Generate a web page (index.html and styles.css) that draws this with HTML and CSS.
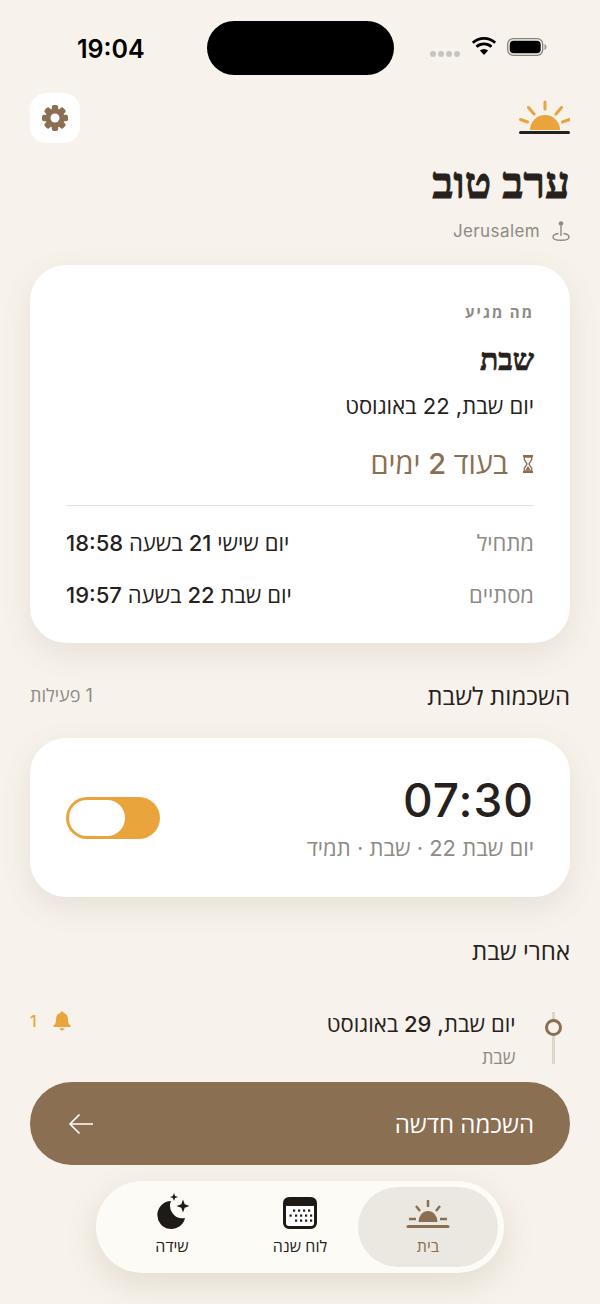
FILE: index.html
```html
<!DOCTYPE html>
<html lang="he" dir="rtl">
<head>
<meta charset="utf-8">
<title>שבת</title>
<link rel="stylesheet" href="styles.css">
</head>
<body>
<div class="screen">
  <div class="status" dir="ltr">
    <div class="time">19:04</div>
    <div class="island"></div>
    <div class="status-icons">
      <span class="dots"><i></i><i></i><i></i><i></i></span>
      <svg class="wifi" width="26" height="20" viewBox="0 0 26 20"><path d="M13 19 8.900 14.500a6 6 0 0 1 8.200 0Z" fill="#000"/><path d="M5.500 10.800a11 11 0 0 1 15 0M1.800 6.700a16.500 16.500 0 0 1 22.400 0" fill="none" stroke="#000" stroke-width="2.800"/></svg>
      <svg class="battery" width="40" height="18" viewBox="0 0 40 18"><rect x="0.700" y="0.700" width="35" height="16.600" rx="5.500" fill="none" stroke="#85827c" stroke-width="1.300"/><rect x="2.700" y="2.700" width="31" height="12.600" rx="4" fill="#000"/><path d="M37.500 6c1.500.5 2 1.700 2 3s-.5 2.500-2 3Z" fill="#9a9791"/></svg>
    </div>
  </div>

  <header class="top">
    <svg class="sun" width="52" height="36" viewBox="0 0 52 36">
      <path d="M12 31a15 15 0 0 1 30 0Z" fill="#e9a43c"/>
      <path d="M27 3v7M10.500 8.500l5.500 6.500M43.500 8.500 38 15M2.500 20.500l7 2.500M51.500 20.500l-7 2.500" stroke="#e9a43c" stroke-width="3" stroke-linecap="round" fill="none"/>
      <rect x="1" y="32" width="51" height="3" rx="1.500" fill="#26211c"/>
    </svg>
    <button class="gear-btn">
      <svg width="28" height="28" viewBox="0 0 28 28">
        <g fill="#8b6f52">
          <circle cx="14" cy="14" r="9.500"/>
          <rect x="10.800" y="1" width="6.400" height="26" rx="2"/>
          <rect x="10.800" y="1" width="6.400" height="26" rx="2" transform="rotate(45 14 14)"/>
          <rect x="10.800" y="1" width="6.400" height="26" rx="2" transform="rotate(90 14 14)"/>
          <rect x="10.800" y="1" width="6.400" height="26" rx="2" transform="rotate(135 14 14)"/>
        </g>
        <circle cx="14" cy="14" r="4.500" fill="#fff"/>
      </svg>
    </button>
  </header>

  <h1 class="greeting">ערב טוב</h1>
  <div class="location">
    <svg width="18" height="22" viewBox="0 0 18 22"><circle cx="9" cy="3.500" r="2.300" fill="#8e8a84"/><path d="M9 5.500V16" stroke="#8e8a84" stroke-width="1.400"/><path d="M6.500 13.500C3 14 1 15.300 1 17c0 2 3.300 3.300 8 3.300s8-1.300 8-3.300c0-1.700-2-3-5.500-3.500" fill="none" stroke="#8e8a84" stroke-width="1.400"/></svg>
    <span>Jerusalem</span>
  </div>

  <section class="card next">
    <div class="eyebrow">מה מגיע</div>
    <div class="holiday">שבת</div>
    <div class="date">יום שבת, 22 באוגוסט</div>
    <div class="countdown">
      <svg width="12" height="18" viewBox="0 0 12 18"><path d="M1 1h10M1 17h10" stroke="#8b6f52" stroke-width="2" fill="none"/><path d="M2.300 2v2.500L5 9l-2.700 4.500V16h7.400v-2.500L7 9l2.700-4.500V2Z" fill="none" stroke="#8b6f52" stroke-width="1.400"/><path d="M3.500 15 6 11l2.500 4Z" fill="#8b6f52"/></svg>
      <span>בעוד 2 ימים</span>
    </div>
    <div class="times">
      <div class="row"><span class="label">מתחיל</span><span class="value">יום שישי 21 בשעה 18:58</span></div>
      <div class="row"><span class="label">מסתיים</span><span class="value">יום שבת 22 בשעה 19:57</span></div>
    </div>
  </section>

  <div class="section-head">
    <h2>השכמות לשבת</h2>
    <span class="count">1 פעילות</span>
  </div>

  <section class="card alarm">
    <div class="alarm-text">
      <div class="clock" dir="ltr">07:30</div>
      <div class="alarm-sub">יום שבת 22 · שבת · תמיד</div>
    </div>
    <div class="toggle"><div class="thumb"></div></div>
  </section>

  <div class="section-head after">
    <h2>אחרי שבת</h2>
  </div>

  <div class="item">
    <div class="rail"><div class="ring"></div></div>
    <div class="item-text">
      <div class="item-date">יום שבת, 29 באוגוסט</div>
      <div class="item-sub">שבת</div>
    </div>
    <div class="badge">
      <svg width="20" height="20" viewBox="0 0 20 20"><path d="M10 0.500c1 0 1.600.7 1.700 1.500 3 .8 4.300 3.300 4.300 6.500 0 3.500 1 5 2.500 6.300.5.600.2 1.200-.5 1.200H2c-.7 0-1-.6-.5-1.200C3 13.500 4 12 4 8.500 4 5.300 5.300 2.800 8.300 2c.1-.8.700-1.500 1.700-1.500ZM7.500 17.300h5c-.3 1.300-1.300 2.200-2.500 2.200s-2.200-.9-2.500-2.200Z" fill="#e9a43c"/></svg>
      <span>1</span>
    </div>
  </div>

  <button class="cta">
    <span>השכמה חדשה</span>
    <svg width="26" height="22" viewBox="0 0 26 22"><path d="M25 11H2M11.500 1.500 2 11l9.500 9.500" fill="none" stroke="#fff" stroke-width="1.600"/></svg>
  </button>

  <nav class="tabs">
    <div class="tab active">
      <svg width="44" height="30" viewBox="0 0 44 30"><path d="M12.500 23a9.500 11 0 0 1 19 0Z" fill="#8b6f52"/><path d="M22 1v7M10 7l4 5M34 7l-4 5M3 20h7M34 20h7" stroke="#8b6f52" stroke-width="2.400" fill="none"/><rect x="0.500" y="26" width="43" height="3" rx="1.500" fill="#8b6f52"/></svg>
      <span>בית</span>
    </div>
    <div class="tab">
      <svg width="34" height="32" viewBox="0 0 34 32"><rect x="1.500" y="1.500" width="31" height="29" rx="4.500" fill="#fff" stroke="#1d1a17" stroke-width="3"/><rect x="1.500" y="1.500" width="31" height="7.500" rx="3" fill="#1d1a17"/><g fill="#1d1a17"><rect x="10" y="12.500" width="2.200" height="2.200"/><rect x="15" y="12.500" width="2.200" height="2.200"/><rect x="20" y="12.500" width="2.200" height="2.200"/><rect x="25" y="12.500" width="2.200" height="2.200"/><rect x="6.500" y="17.500" width="2.200" height="2.200"/><rect x="12" y="17.500" width="2.200" height="2.200"/><rect x="17" y="17.500" width="2.200" height="2.200"/><rect x="22" y="17.500" width="2.200" height="2.200"/><rect x="27" y="17.500" width="2.200" height="2.200"/><rect x="12" y="22.500" width="2.200" height="2.200"/><rect x="17" y="22.500" width="2.200" height="2.200"/><rect x="22" y="22.500" width="2.200" height="2.200"/><rect x="27" y="22.500" width="2.200" height="2.200"/></g></svg>
      <span>לוח שנה</span>
    </div>
    <div class="tab">
      <svg width="36" height="36" viewBox="0 0 36 36"><path d="M17 8A14 14 0 1 0 31 25 12.500 12.500 0 0 1 17 8Z" fill="#1d1a17"/><path d="M20 0l1.100 2.900L24 4l-2.900 1.100L20 8l-1.100-2.900L16 4l2.900-1.100ZM29 6.500l1.700 4.800 4.800 1.700-4.800 1.700-1.700 4.800-1.700-4.800-4.800-1.700 4.800-1.700Z" fill="#1d1a17"/></svg>
      <span>שידה</span>
    </div>
  </nav>
</div>
</body>
</html>
```
FILE: styles.css
```css
* { box-sizing: border-box; }
html, body { margin: 0; height: 100%; }
body {
  background: #f7f2eb;
  font-family: Inter, "Open Sans", "Liberation Sans", sans-serif;
  color: #26211c;
}
.screen {
  position: relative;
  width: 600px;
  height: 1304px;
  overflow: hidden;
  padding: 0 30px;
  background: #f7f2eb;
}
.status {
  display: flex;
  align-items: center;
  height: 54px;
  margin-top: 21px;
  padding-left: 47px;
}
.time { width: 130px; font-size: 25px; font-weight: 600; color: #000; padding-top: 1px; }
.island { width: 187px; height: 54px; border-radius: 27px; background: #000; }
.status-icons { display: flex; align-items: center; margin-left: 36px; gap: 10px; }
.dots { display: flex; gap: 2px; margin-top: 12px; margin-right: 1px; }
.dots i { width: 6px; height: 6px; border-radius: 50%; background: #c8c5c0; }
.wifi { margin-top: -5px; }
.battery { margin-top: -2px; }

.top {
  display: flex;
  justify-content: space-between;
  align-items: flex-start;
  margin-top: 18px;
  height: 50px;
}
.sun { margin-top: 6px; }
.gear-btn {
  width: 50px;
  height: 50px;
  padding: 0;
  border: 0;
  border-radius: 16px;
  background: #fff;
  display: flex;
  align-items: center;
  justify-content: center;
}
.greeting {
  margin: 18px 0 0;
  font-family: "Liberation Serif", serif;
  font-size: 44px;
  font-weight: 700;
  line-height: 46px;
  -webkit-text-stroke: .9px #26211c;
  color: #26211c;
}
.location {
  display: flex;
  align-items: center;
  gap: 12px;
  margin-top: 12px;
  font-size: 17px;
  color: #8e8a84;
  height: 24px;
  letter-spacing: .4px;
}
.card {
  background: #fff;
  border-radius: 36px;
  box-shadow: 0 10px 30px rgba(120, 100, 70, .12);
}
.next { margin-top: 22px; height: 378px; padding: 38px 36px 0; }
.eyebrow {
  font-size: 15px;
  font-weight: 700;
  line-height: 20px;
  letter-spacing: 2px;
  color: #8e8a84;
}
.holiday {
  margin-top: 20px;
  font-family: "Liberation Serif", serif;
  font-size: 30px;
  font-weight: 700;
  line-height: 34px;
  -webkit-text-stroke: .7px #26211c;
}
.date { margin-top: 14px; font-size: 22px; line-height: 30px; }
.countdown {
  display: flex;
  align-items: center;
  gap: 14px;
  margin-top: 24px;
  font-size: 29px;
  font-weight: 500;
  line-height: 38px;
  color: #8b6f52;
}
.times { margin-top: 22px; border-top: 1px solid #e4e2dd; padding-top: 10px; }
.row {
  display: flex;
  justify-content: space-between;
  align-items: center;
  height: 52px;
  font-size: 22px;
}
.label { color: #8e8a84; }
.value { font-weight: 500; }

.section-head {
  display: flex;
  justify-content: space-between;
  align-items: center;
  margin-top: 36px;
  height: 32px;
}
.section-head h2 { margin: 0; font-size: 24px; font-weight: 500; }
.count { font-size: 18px; color: #8e8a84; }
.after { margin-top: 37px; }

.alarm {
  margin-top: 27px;
  height: 159px;
  padding: 0 36px;
  display: flex;
  justify-content: space-between;
  align-items: center;
}
.clock { font-size: 46px; font-weight: 500; line-height: 56px; letter-spacing: 1px; text-align: right; }
.alarm-sub { margin-top: 5px; font-size: 22px; line-height: 30px; color: #8e8a84; }
.toggle {
  width: 94px;
  height: 42px;
  margin-top: 1px;
  padding: 3px;
  border-radius: 21px;
  background: #e9a43c;
  display: flex;
  justify-content: flex-end;
}
.thumb { width: 56px; height: 36px; border-radius: 18px; background: #fff; }

.item {
  display: flex;
  align-items: flex-start;
  margin-top: 46px;
  height: 52px;
}
.rail {
  position: relative;
  width: 3px;
  height: 52px;
  margin-right: 15.500px;
  background: #ddd7ca;
}
.ring {
  position: absolute;
  top: 7px;
  left: -7px;
  width: 17px;
  height: 17px;
  border-radius: 50%;
  border: 3px solid #8b6f52;
  background: #f7f2eb;
}
.item-text { margin-right: 36px; flex: 1; }
.item-date { font-size: 22px; font-weight: 500; line-height: 24px; }
.item-sub { margin-top: 11px; font-size: 18px; line-height: 22px; color: #8e8a84; }
.badge {
  display: flex;
  align-items: center;
  gap: 15px;
  margin-top: -2px;
  font-size: 16px;
  font-weight: 500;
  color: #e9a43c;
  height: 22px;
}

.cta {
  position: absolute;
  left: 30px;
  top: 1082px;
  width: 540px;
  height: 83px;
  padding: 0 36px 0 38px;
  border: 0;
  border-radius: 42px;
  background: #8b6f52;
  color: #fff;
  display: flex;
  justify-content: space-between;
  align-items: center;
  font-family: inherit;
  font-size: 24px;
  font-weight: 500;
}
.tabs {
  position: absolute;
  left: 96px;
  top: 1181px;
  width: 408px;
  height: 92px;
  padding: 6px;
  border-radius: 46px;
  background: #fdfbf6;
  box-shadow: 0 10px 32px rgba(120, 100, 70, .16);
  display: flex;
}
.tab {
  width: 116px;
  display: flex;
  flex-direction: column;
  align-items: center;
  justify-content: flex-end;
  gap: 6px;
  padding-bottom: 10px;
  border-radius: 40px;
  font-size: 16px;
  font-weight: 500;
  color: #26211c;
}
.tab.active { width: 140px; background: #ebe8e1; color: #8b6f52; }
.tab + .tab + .tab { margin-right: 12px; }
```
